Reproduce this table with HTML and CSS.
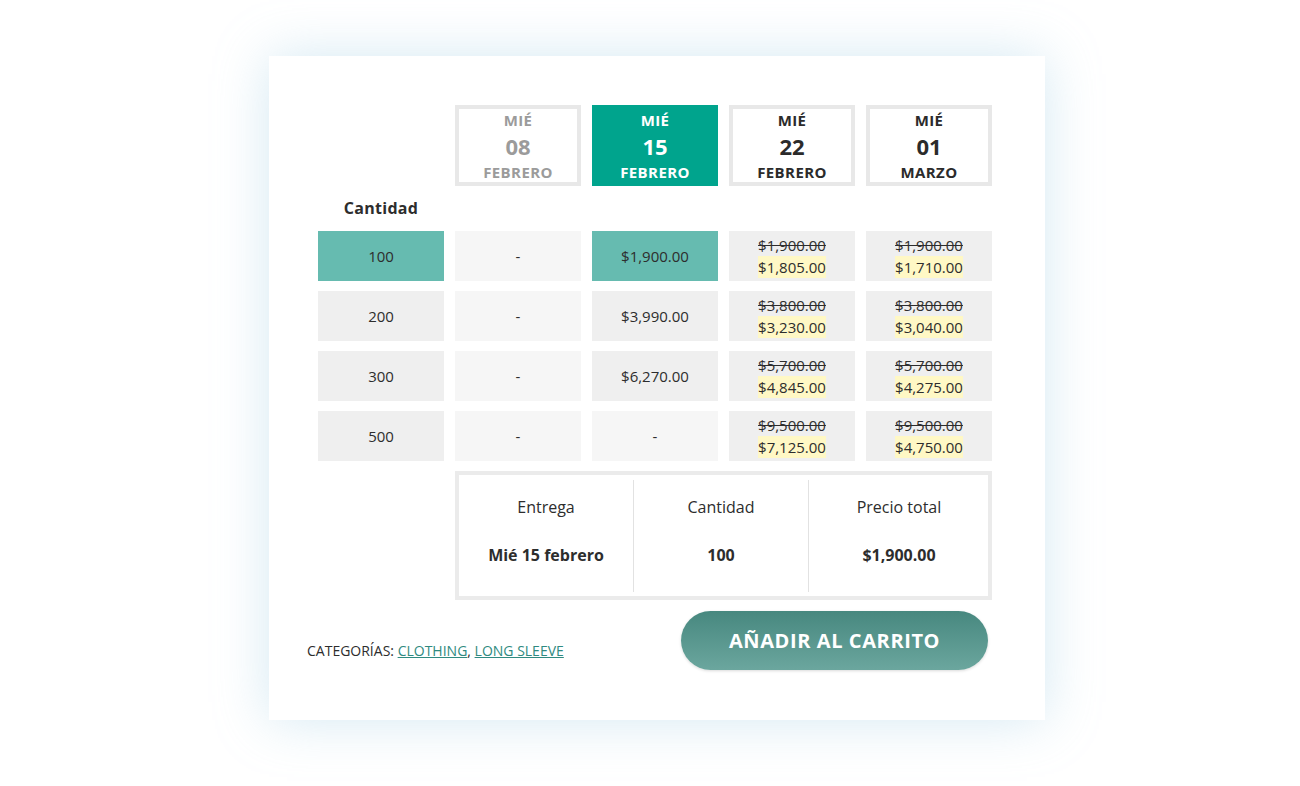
FILE: index.html
```html
<!DOCTYPE html>
<html>
<head>
    <title>Precios por fecha</title>
    <meta charset="UTF-8">
    <link rel="stylesheet" href="styles.css">
</head>
<body>
    <div class="tarjeta">
        <div class="tabla">
            <!-- cabecera de fechas -->
            <div class="vacio"></div>
            <div class="fecha pasada">
                <span class="dia">MIÉ</span>
                <span class="numero">08</span>
                <span class="mes">FEBRERO</span>
            </div>
            <div class="fecha elegida">
                <span class="dia">MIÉ</span>
                <span class="numero">15</span>
                <span class="mes">FEBRERO</span>
            </div>
            <div class="fecha">
                <span class="dia">MIÉ</span>
                <span class="numero">22</span>
                <span class="mes">FEBRERO</span>
            </div>
            <div class="fecha">
                <span class="dia">MIÉ</span>
                <span class="numero">01</span>
                <span class="mes">MARZO</span>
            </div>

            <div class="etiqueta">Cantidad</div>
            <div class="vacio fila-etiqueta"></div>

            <!-- filas de precios -->
            <div class="celda elegida">100</div>
            <div class="celda apagada">-</div>
            <div class="celda elegida">$1,900.00</div>
            <div class="celda"><del>$1,900.00</del><mark>$1,805.00</mark></div>
            <div class="celda"><del>$1,900.00</del><mark>$1,710.00</mark></div>

            <div class="celda">200</div>
            <div class="celda apagada">-</div>
            <div class="celda">$3,990.00</div>
            <div class="celda"><del>$3,800.00</del><mark>$3,230.00</mark></div>
            <div class="celda"><del>$3,800.00</del><mark>$3,040.00</mark></div>

            <div class="celda">300</div>
            <div class="celda apagada">-</div>
            <div class="celda">$6,270.00</div>
            <div class="celda"><del>$5,700.00</del><mark>$4,845.00</mark></div>
            <div class="celda"><del>$5,700.00</del><mark>$4,275.00</mark></div>

            <div class="celda">500</div>
            <div class="celda apagada">-</div>
            <div class="celda apagada">-</div>
            <div class="celda"><del>$9,500.00</del><mark>$7,125.00</mark></div>
            <div class="celda"><del>$9,500.00</del><mark>$4,750.00</mark></div>

            <div class="resumen">
                <div class="dato">
                    <span class="titulo">Entrega</span>
                    <span class="valor">Mié 15 febrero</span>
                </div>
                <div class="dato">
                    <span class="titulo">Cantidad</span>
                    <span class="valor">100</span>
                </div>
                <div class="dato">
                    <span class="titulo">Precio total</span>
                    <span class="valor">$1,900.00</span>
                </div>
            </div>
        </div>

        <div class="pie">
            <div class="categorias">CATEGORÍAS: <a href="#">CLOTHING</a>, <a href="#">LONG SLEEVE</a></div>
            <span class="boton">AÑADIR AL CARRITO</span>
        </div>
    </div>
</body>
</html>
```

FILE: styles.css
```css
body{
    margin: 0;
    padding: 56px 0 66px;
    background-color: #ffffff;
    font-family: "Open Sans", sans-serif;
    color: #2d2d2d;
}

.tarjeta{
    width: 776px;
    height: 664px;
    box-sizing: border-box;
    margin: 0 0 0 269px;
    padding: 49px 52px 0 38px;
    background-color: #ffffff;
    box-shadow: 0 0 50px rgba(150, 200, 225, 0.4);
}

.tabla{
    display: grid;
    grid-template-columns: repeat(5, 126px);
    grid-template-rows: 81px 25px repeat(4, 50px) 129px;
    column-gap: 11px;
    row-gap: 10px;
    margin-left: 11px;
}

.fecha{
    box-sizing: border-box;
    border: 4px solid #e8e8e8;
    display: flex;
    flex-direction: column;
    align-items: center;
    justify-content: center;
    font-weight: 700;
    color: #2b2b2b;
}

.fecha .dia, .fecha .mes{
    font-size: 15px;
    line-height: 26px;
    letter-spacing: 0.4px;
}

.fecha .numero{
    font-size: 22px;
    line-height: 26px;
}

.fecha.pasada{
    color: #9b9b9b;
}

.fecha.elegida{
    background-color: #00a48d;
    border-color: #00a48d;
    color: #ffffff;
}

.etiqueta{
    font-weight: 700;
    font-size: 16px;
    line-height: 25px;
    text-align: center;
    letter-spacing: 0.3px;
}

.fila-etiqueta{
    grid-column: span 4;
}

.celda{
    background-color: #efefef;
    display: flex;
    flex-direction: column;
    align-items: center;
    justify-content: center;
    font-size: 15px;
    line-height: 22px;
}

.celda.apagada{
    background-color: #f6f6f6;
}

.celda.elegida{
    background-color: #66bbb0;
}

.celda del{
    text-decoration: line-through;
}

.celda mark{
    background-color: #fff8c5;
    color: #2d2d2d;
}

.resumen{
    grid-column: 2 / 6;
    box-sizing: border-box;
    border: 4px solid #ebebeb;
    padding: 5px 0 4px;
    display: grid;
    grid-template-columns: 174px 175px 181px;
}

.dato{
    display: flex;
    flex-direction: column;
    align-items: center;
    padding-top: 15px;
    border-left: 1px solid #e2e2e2;
}

.dato:first-child{
    border-left: none;
}

.titulo{
    font-size: 16px;
    line-height: 24px;
}

.valor{
    font-size: 16px;
    font-weight: 700;
    line-height: 24px;
    margin-top: 24px;
}

.pie{
    display: flex;
    justify-content: space-between;
    align-items: center;
    margin-top: 11px;
    padding-right: 5px;
}

.categorias{
    font-size: 14px;
    margin-top: 19px;
}

.categorias a{
    color: #2f8a80;
}

.boton{
    width: 307px;
    height: 59px;
    border-radius: 30px;
    background: linear-gradient(#47887f, #6ba69e);
    box-shadow: 0 1px 3px rgba(0, 0, 0, 0.15);
    color: #ffffff;
    font-size: 20px;
    font-weight: 700;
    letter-spacing: 0.6px;
    display: flex;
    align-items: center;
    justify-content: center;
}
```
